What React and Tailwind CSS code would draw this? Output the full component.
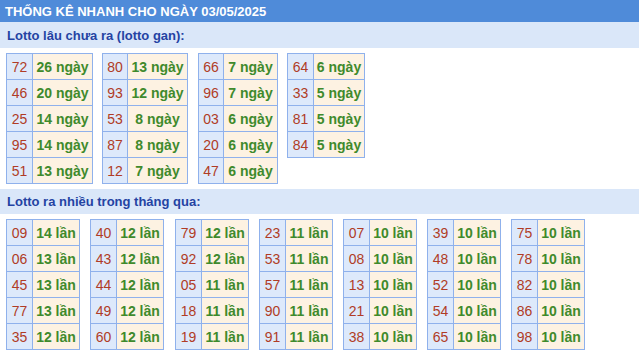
const ganTables = [
  { ml: "ml-[6px]", numW: "w-[26px]", valW: "w-[60px]", rows: [["72", "26"], ["46", "20"], ["25", "14"], ["95", "14"], ["51", "13"]] },
  { ml: "ml-[9px]", numW: "w-[25px]", valW: "w-[60px]", rows: [["80", "13"], ["93", "12"], ["53", "8"], ["87", "8"], ["12", "7"]] },
  { ml: "ml-[10px]", numW: "w-[25px]", valW: "w-[54px]", rows: [["66", "7"], ["96", "7"], ["03", "6"], ["20", "6"], ["47", "6"]] },
  { ml: "ml-[9px]", numW: "w-[26px]", valW: "w-[51px]", rows: [["64", "6"], ["33", "5"], ["81", "5"], ["84", "5"]] },
]

const hotTables = [
  { ml: "ml-[6px]", rows: [["09", "14"], ["06", "13"], ["45", "13"], ["77", "13"], ["35", "12"]] },
  { ml: "ml-[10px]", rows: [["40", "12"], ["43", "12"], ["44", "12"], ["49", "12"], ["60", "12"]] },
  { ml: "ml-[11px]", rows: [["79", "12"], ["92", "12"], ["05", "11"], ["18", "11"], ["19", "11"]] },
  { ml: "ml-[10px]", rows: [["23", "11"], ["53", "11"], ["57", "11"], ["90", "11"], ["91", "11"]] },
  { ml: "ml-[10px]", rows: [["07", "10"], ["08", "10"], ["13", "10"], ["21", "10"], ["38", "10"]] },
  { ml: "ml-[10px]", rows: [["39", "10"], ["48", "10"], ["52", "10"], ["54", "10"], ["65", "10"]] },
  { ml: "ml-[10px]", rows: [["75", "10"], ["78", "10"], ["82", "10"], ["86", "10"], ["98", "10"]] },
]

// small two-column box: lotto number | count
function LotoBox({ ml, numW, valW, rows, unit }) {
  return (
    <div className={`${ml} flex flex-col self-start border-l border-t border-[#8fb1ec] text-[14px]`}>
      {rows.map(([num, val]) => (
        <div key={num} className="flex h-[26px]">
          <div className={`${numW} flex items-center justify-center border-r border-b border-[#8fb1ec] bg-[#dde9fb] text-[#b03c26]`}>
            {num}
          </div>
          <div className={`${valW} flex items-center justify-center border-r border-b border-[#8fb1ec] bg-[#fdf2e2] font-bold text-[#3f8a2c]`}>
            {val} {unit}
          </div>
        </div>
      ))}
    </div>
  )
}

const App = () => {
  return (
    <div className="w-[639px] h-[353px] overflow-hidden bg-white text-[13px] leading-none" style={{ fontFamily: '"Liberation Sans", Arial, sans-serif' }}>
      <div className="h-[22px] bg-[#4f8bd9] pl-[5px] flex items-center font-bold text-white">
        THỐNG KÊ NHANH CHO NGÀY 03/05/2025
      </div>

      <div className="h-[26px] bg-[#dae7f9] pl-[7px] flex items-center font-bold text-[#2443a3]">
        Lotto lâu chưa ra (lotto gan):
      </div>
      <div className="flex mt-[5px]">
        {ganTables.map((t, i) => (
          <LotoBox key={i} {...t} unit="ngày" />
        ))}
      </div>

      <div className="mt-[5px] h-[25px] bg-[#dae7f9] pl-[7px] flex items-center font-bold text-[#2443a3]">
        Lotto ra nhiều trong tháng qua:
      </div>
      <div className="flex mt-[5px]">
        {hotTables.map((t, i) => (
          <LotoBox key={i} {...t} numW="w-[26px]" valW="w-[47px]" unit="lần" />
        ))}
      </div>
    </div>
  )
}

export default App
